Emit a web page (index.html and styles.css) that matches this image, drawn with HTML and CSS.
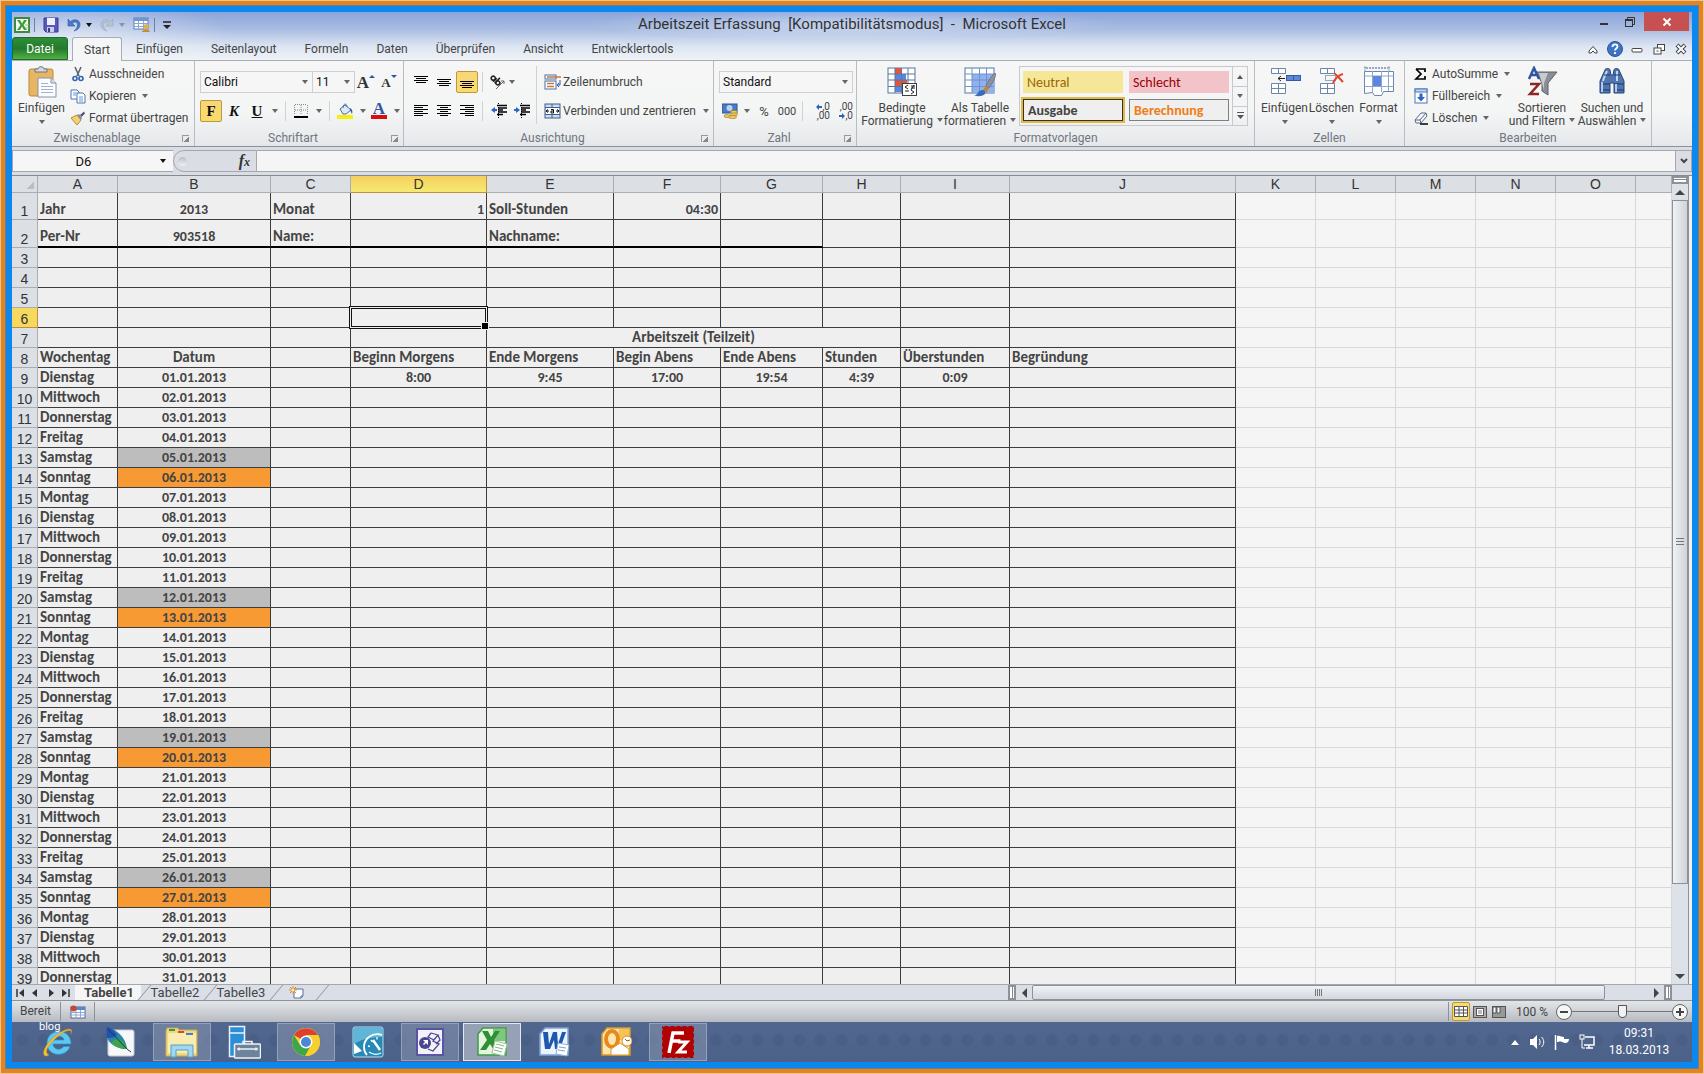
FILE: index.html
```html
<!DOCTYPE html>
<html lang="de">
<head>
  <meta charset="UTF-8" />
  <meta name="viewport" content="width=device-width, initial-scale=1.0" />
  <title>Arbeitszeit Erfassung - Microsoft Excel</title>
  <link rel="stylesheet" href="styles.css">
</head>
<body>

<div class="desktop">

  <header class="titlebar">
    <div class="title-row">
      <div class="quick-access">
        <svg class="app-icon" width="16" height="16" viewBox="0 0 16 16"><rect x="1" y="1" width="14" height="14" fill="#f4fbf2" stroke="#3b8a3e" stroke-width="2"/><path d="M3 3l3 0 2 3.500 2-3.500 3 0-3.500 5 3.500 5h-3l-2-3.500-2 3.500H3l3.500-5z" fill="#3f9b35"/><path d="M11 8h4M11 11h4" stroke="#8ec58b"/></svg>
        <span class="qa-sep"></span>
        <button aria-label="Speichern"><svg width="16" height="16" viewBox="0 0 16 16"><path d="M1 1h14v14H3l-2-2z" fill="#5a58b8" stroke="#3c3a8c"/><rect x="4" y="1" width="8" height="7" fill="#eef1fb"/><rect x="4" y="10" width="7" height="5" fill="#c9cdea"/><rect x="5" y="11" width="2" height="4" fill="#3c3a8c"/></svg></button>
        <button class="with-arrow" aria-label="Rückgängig"><svg width="14" height="16" viewBox="0 0 14 16"><path d="M1 2v7h7L5.500 6.500C8 4 11 5 10.500 8.500c-.2 2-1.500 4-3.500 5.500 4-1 6-3.500 6-6.500C13 2.500 7 1.500 3.500 4.500z" fill="#4a78c8" stroke="#2f5aa8" stroke-width=".6"/></svg><i class="arrow dark"></i></button>
        <button class="with-arrow" aria-label="Wiederholen"><svg width="14" height="16" viewBox="0 0 14 16"><path d="M13 2v7H6l2.500-2.500C6 4 3 5 3.500 8.500c.2 2 1.500 4 3.500 5.500-4-1-6-3.500-6-6.500C1 2.500 7 1.500 10.500 4.500z" fill="#b9c2d3" stroke="#98a4b8" stroke-width=".6"/></svg><i class="arrow pale"></i></button>
        <button aria-label="Tabelle"><svg width="17" height="16" viewBox="0 0 17 16"><rect x="1" y="1" width="14" height="11" fill="#fff" stroke="#5d7db8"/><rect x="1" y="1" width="14" height="3" fill="#6f97d6"/><path d="M1 6.500h14M1 9.500h14M5.500 4v8M10.500 4v8" stroke="#8aa6d3"/><circle cx="13" cy="9.500" r="2.500" fill="#e6b04a"/><path d="M9 15c0-3 8-3 8 0z" fill="#c98d28"/></svg></button>
        <span class="qa-sep"></span>
        <button aria-label="Anpassen"><svg width="8" height="8" viewBox="0 0 8 8"><path d="M0 1h8" stroke="#222" stroke-width="1.500"/><path d="M0 4h8L4 8z" fill="#222"/></svg></button>
      </div>
      <h1 class="window-title">Arbeitszeit Erfassung &nbsp;[Kompatibilitätsmodus] &nbsp;- &nbsp;Microsoft Excel</h1>
      <div class="window-buttons">
        <button aria-label="Minimieren"><svg width="10" height="10" viewBox="0 0 10 10"><rect x="1" y="6" width="8" height="2" fill="#333"/></svg></button>
        <button aria-label="Wiederherstellen"><svg width="12" height="12" viewBox="0 0 12 12"><path d="M3.500 3V1.500h7v7H9" fill="none" stroke="#333"/><rect x="1.500" y="4" width="7" height="6.500" fill="none" stroke="#333"/><path d="M1 4h8" stroke="#333" stroke-width="2"/></svg></button>
        <button class="close" aria-label="Schließen"><svg width="10" height="10" viewBox="0 0 10 10"><path d="M1.500 1.500l7 7M8.500 1.500l-7 7" stroke="#fff" stroke-width="2"/></svg></button>
      </div>
    </div>
    <div class="tab-row">
      <nav class="ribbon-tabs">
        <button class="file-tab">Datei</button>
        <button class="active">Start</button>
        <button>Einfügen</button>
        <button>Seitenlayout</button>
        <button>Formeln</button>
        <button>Daten</button>
        <button>Überprüfen</button>
        <button>Ansicht</button>
        <button>Entwicklertools</button>
      </nav>
      <div class="doc-buttons">
        <button aria-label="Menüband minimieren"><svg width="12" height="12" viewBox="0 0 12 12"><path d="M2 8l4-4.500L10 8v2H8L6 8l-2 2H2z" fill="#fff" stroke="#444"/></svg></button>
        <button aria-label="Hilfe"><svg width="16" height="16" viewBox="0 0 16 16"><circle cx="8" cy="8" r="7.500" fill="#3f74c4" stroke="#2b5799"/><path d="M5.500 6c0-3.500 5-3.500 5-.5 0 2-2.500 2-2.500 4M8 11v2" fill="none" stroke="#fff" stroke-width="1.800"/></svg></button>
        <button aria-label="Fenster minimieren"><svg width="12" height="12" viewBox="0 0 12 12"><rect x="1" y="5.500" width="10" height="3.500" rx="1" fill="#fff" stroke="#444"/></svg></button>
        <button aria-label="Fenster wiederherstellen"><svg width="12" height="12" viewBox="0 0 12 12"><rect x="4.500" y="1.500" width="7" height="6" fill="#fff" stroke="#444"/><rect x="1" y="5" width="7" height="6" fill="#fff" stroke="#444"/><path d="M3.500 8h2" stroke="#444"/></svg></button>
        <button aria-label="Fenster schließen"><svg width="12" height="12" viewBox="0 0 12 12"><path d="M2 2l8 8M10 2l-8 8" stroke="#444" stroke-width="4"/><path d="M2.500 2.500l7 7M9.500 2.500l-7 7" stroke="#fff" stroke-width="2"/></svg></button>
      </div>
    </div>
  </header>

  <section class="ribbon">

    <div class="group clipboard">
      <div class="group-body">
        <button class="big"><svg width="30" height="32" viewBox="0 0 30 32"><rect x="2" y="3" width="24" height="27" rx="2" fill="#e8b562" stroke="#b98a3d"/><path d="M8 6h12V3h-3c0-3-6-3-6 0H8z" fill="#d5d9de" stroke="#6c727a"/><path d="M11 12h13l5 5v14H11z" fill="#fbfcfe" stroke="#8794a8"/><path d="M24 12v5h5" fill="#dde3ec" stroke="#8794a8"/><path d="M14 17.500h7M14 20.500h12M14 23.500h12M14 26.500h12" stroke="#9fb2cf"/></svg><span>Einfügen</span><i class="arrow"></i></button>
        <div class="stack">
          <button class="small"><svg width="16" height="16" viewBox="0 0 16 16"><path d="M5 1l4 9M11 1L7 10" stroke="#5c6672" stroke-width="1.600"/><circle cx="5" cy="12.500" r="2" fill="none" stroke="#2f62b5" stroke-width="1.600"/><circle cx="11" cy="12.500" r="2" fill="none" stroke="#2f62b5" stroke-width="1.600"/></svg>Ausschneiden</button>
          <button class="small"><svg width="16" height="16" viewBox="0 0 16 16"><path d="M1 2h6l2 2v7H1z" fill="#fff" stroke="#4c74b5"/><path d="M7 5h6l2 2v8H7z" fill="#fff" stroke="#4c74b5"/><path d="M3 5h4M3 7h3M9 9h4M9 11h4M9 13h4" stroke="#6e95d6"/></svg>Kopieren<i class="arrow"></i></button>
          <button class="small"><svg width="16" height="16" viewBox="0 0 16 16"><path d="M1 8l6-3 4 5-4 5z" fill="#f3d071" stroke="#b68f31"/><path d="M7 5l2-1 3 4-1 2z" fill="#8d86a8"/><path d="M10 5l4-3.500 1 2L11.500 7z" fill="#565271"/></svg>Format übertragen</button>
        </div>
      </div>
      <div class="group-label"><span>Zwischenablage</span><i class="launcher"></i></div>
    </div>

    <div class="group font">
      <div class="group-body lines">
        <div class="line">
          <select class="font-name" aria-label="Schriftart"><option>Calibri</option></select><select class="font-size" aria-label="Schriftgrad"><option>11</option></select>
          <button class="tool" aria-label="Schrift vergrößern"><b class="grow">A</b><i class="mini-up"></i></button>
          <button class="tool" aria-label="Schrift verkleinern"><b class="shrink">A</b><i class="mini-down"></i></button>
        </div>
        <div class="line">
          <button class="tool on serif"><b>F</b></button>
          <button class="tool serif"><b><em>K</em></b></button>
          <button class="tool serif"><b><u>U</u></b></button>
          <i class="arrow spaced"></i><span class="sep"></span>
          <button class="tool" aria-label="Rahmen"><svg width="14" height="14" viewBox="0 0 14 14"><path d="M.5 1v10M7 1v10M13.500 1v10M1 .5h12M1 6h12" stroke="#8a8a8a" stroke-dasharray="1 1"/><path d="M0 13h14" stroke="#000" stroke-width="2"/></svg></button>
          <i class="arrow spaced"></i><span class="sep"></span>
          <button class="tool" aria-label="Füllfarbe"><svg width="16" height="16" viewBox="0 0 16 16"><path d="M3 6l5-4 6 5-5 4H6z" fill="#dfe8f5" stroke="#4a6ea8"/><path d="M6 5c0-5 4-5 4-1" fill="none" stroke="#4a6ea8"/><path d="M13 5c2 1 3 3 2 6-1-1-1-3-2-4z" fill="#2f5aa8"/><rect x="0" y="12" width="16" height="4" fill="#f7ee0c"/></svg></button>
          <i class="arrow spaced"></i>
          <button class="tool" aria-label="Schriftfarbe"><span class="font-color">A</span></button>
          <i class="arrow spaced"></i>
        </div>
      </div>
      <div class="group-label"><span>Schriftart</span><i class="launcher"></i></div>
    </div>

    <div class="group align">
      <div class="group-body">
        <div class="lines">
          <div class="line">
            <button class="tool" aria-label="Oben"><svg width="14" height="14" viewBox="0 0 14 14"><path d="M0 1.500h14M2 3.500h10M0 5.500h14M2 7.500h10" stroke="#000"/></svg></button>
            <button class="tool" aria-label="Mitte"><svg width="14" height="14" viewBox="0 0 14 14"><path d="M0 4.500h14M2 6.500h10M0 8.500h14M2 10.500h10" stroke="#000"/></svg></button>
            <button class="tool on" aria-label="Unten"><svg width="14" height="14" viewBox="0 0 14 14"><path d="M0 6.500h14M2 8.500h10M0 10.500h14M2 12.500h10" stroke="#000"/></svg></button>
            <span class="sep"></span>
            <button class="tool orient" aria-label="Ausrichtung"><svg width="16" height="16" viewBox="0 0 16 16"><g fill="none" stroke="#222" stroke-width="1.500" transform="rotate(45 5 6)"><circle cx="2.500" cy="6" r="2"/><path d="M5 3.500v5M7 1v7.500"/><circle cx="9" cy="6" r="2"/></g><path d="M6 15l8-8M14 10V7h-3" stroke="#666" fill="none"/></svg><i class="arrow"></i></button>
          </div>
          <div class="line">
            <button class="tool" aria-label="Links"><svg width="14" height="12" viewBox="0 0 14 12"><path d="M0 .5h14M0 2.500h9M0 4.500h14M0 6.500h9M0 8.500h14M0 10.500h9" stroke="#000"/></svg></button>
            <button class="tool" aria-label="Zentriert"><svg width="14" height="12" viewBox="0 0 14 12"><path d="M0 .5h14M3 2.500h8M0 4.500h14M3 6.500h8M0 8.500h14M3 10.500h8" stroke="#000"/></svg></button>
            <button class="tool" aria-label="Rechts"><svg width="14" height="12" viewBox="0 0 14 12"><path d="M0 .5h14M5 2.500h9M0 4.500h14M5 6.500h9M0 8.500h14M5 10.500h9" stroke="#000"/></svg></button>
            <span class="sep"></span>
            <button class="tool" aria-label="Einzug verkleinern"><svg width="16" height="16" viewBox="0 0 16 16"><path d="M6 2.500h10M7 5h9M7 7h5M7 9h9M6 11.500h6" stroke="#000" stroke-width="1.400"/><path d="M7.500 0v16" stroke="#000" stroke-dasharray="1 1"/><path d="M0 7l4-3v2h2v2H4v2z" fill="#2f62c5"/></svg></button>
            <button class="tool" aria-label="Einzug vergrößern"><svg width="16" height="16" viewBox="0 0 16 16"><path d="M6 2.500h10M7 5h9M7 7h5M7 9h9M6 11.500h6" stroke="#000" stroke-width="1.400"/><path d="M7.500 0v16" stroke="#000" stroke-dasharray="1 1"/><path d="M6 7L2 4v2H0v2h2v2z" fill="#2f62c5"/></svg></button>
          </div>
        </div>
        <span class="tall-sep"></span>
        <div class="lines">
          <div class="line"><button class="small"><svg width="17" height="16" viewBox="0 0 17 16"><rect x="1" y="1" width="11" height="4" fill="#fff" stroke="#4a6ea8"/><path d="M3 3h14" stroke="#c07a3a" stroke-width="1.500"/><rect x="1" y="7" width="11" height="8" fill="#fff" stroke="#4a6ea8"/><path d="M3 9.500h7M3 12.500h7" stroke="#c07a3a" stroke-width="1.500"/><path d="M16 6v5h-3M15 9l-2 2 2 2" fill="none" stroke="#2f5aa8"/></svg>Zeilenumbruch</button></div>
          <div class="line"><button class="small"><svg width="17" height="16" viewBox="0 0 17 16"><rect x="1" y="1" width="15" height="14" fill="#cfdcf0" stroke="#3f5f96"/><path d="M1 4.500h15M1 11.500h15M8 1v3M8 12v3" stroke="#3f5f96"/><rect x="2" y="5" width="13" height="6" fill="#fff"/><path d="M2 8h3M15 8h-3M4 6.500L2 8l2 1.500M13 6.500L15 8l-2 1.500" stroke="#111" fill="none"/><path d="M7 6.500h2.500V10H7V8h2.500" stroke="#111" fill="none"/></svg>Verbinden und zentrieren<i class="arrow"></i></button></div>
        </div>
      </div>
      <div class="group-label"><span>Ausrichtung</span><i class="launcher"></i></div>
    </div>

    <div class="group number">
      <div class="group-body lines">
        <div class="line"><select class="number-format" aria-label="Zahlenformat"><option>Standard</option></select></div>
        <div class="line">
          <button class="tool" aria-label="Währung"><svg width="16" height="16" viewBox="0 0 16 16"><rect x="0" y="1" width="15" height="9" fill="#4a7cc4" stroke="#2b5799"/><circle cx="7.500" cy="5" r="3" fill="#bcd2f0"/><ellipse cx="12" cy="9" rx="3.500" ry="1.600" fill="#f0cb62" stroke="#a87c1f" stroke-width=".7"/><ellipse cx="12" cy="11.500" rx="3.500" ry="1.600" fill="#f0cb62" stroke="#a87c1f" stroke-width=".7"/><ellipse cx="10.500" cy="14" rx="4" ry="1.600" fill="#f0cb62" stroke="#a87c1f" stroke-width=".7"/><ellipse cx="5" cy="13" rx="3" ry="1.500" fill="#f0cb62" stroke="#a87c1f" stroke-width=".7"/></svg></button>
          <i class="arrow"></i>
          <button class="tool sign">%</button>
          <button class="tool narrow">000</button>
          <span class="sep"></span>
          <button class="tool decimals"><span><svg width="6" height="6" viewBox="0 0 6 6"><path d="M0 3l3-3v2h3v2H3v2z" fill="#2f62c5"/></svg>,0</span><span>,00</span></button>
          <button class="tool decimals"><span>,00</span><span><svg width="6" height="6" viewBox="0 0 6 6"><path d="M6 3L3 0v2H0v2h3v2z" fill="#2f62c5"/></svg>,0</span></button>
        </div>
      </div>
      <div class="group-label"><span>Zahl</span><i class="launcher"></i></div>
    </div>

    <div class="group styles">
      <div class="group-body">
        <button class="big"><svg width="32" height="32" viewBox="0 0 32 32"><rect x="2" y="2" width="27" height="25" fill="#fff" stroke="#56779f"/><rect x="9" y="2" width="6" height="6" fill="#e8533c"/><rect x="9" y="8" width="11" height="6" fill="#5b86dd"/><rect x="9" y="14" width="12" height="6" fill="#e8533c"/><rect x="9" y="20" width="6" height="6" fill="#5b86dd"/><path d="M2 8h27M2 14h27M2 20.500h27M9 2v25M15.500 2v25M22 2v25" stroke="#56779f"/><rect x="16.500" y="17.500" width="14" height="12" fill="#fff" stroke="#3a3f48"/><path d="M22 19l-3 2 3 2M19 25h4M25 20h4M25 22h4M28 19l-3 5M25 24l3 2-3 2" fill="none" stroke="#222"/></svg><span>Bedingte<br>Formatierung<i class="arrow"></i></span></button>
        <button class="big"><svg width="32" height="32" viewBox="0 0 32 32"><rect x="1" y="2" width="29" height="25" fill="#fff" stroke="#56779f"/><rect x="8" y="8" width="22" height="19" fill="#8fb1ee"/><path d="M1 8h29M1 14h29M1 20.500h29M8 2v25M15.500 2v25M22.500 2v25" stroke="#6f93cc"/><path d="M31 7c-4 3-7 8-9 13l3 2c3-4 6-9 7-14z" fill="#8c939e" stroke="#5b626c" stroke-width=".6"/><path d="M22 20l3 2-2 4-4-2z" fill="#c8842e"/><path d="M10 30c4-1 3-5 8-6 3 0 4 2 3 4-3 3-7 2-11 2z" fill="#3d6cb4"/></svg><span>Als Tabelle<br>formatieren<i class="arrow"></i></span></button>
        <div class="gallery">
          <div class="swatches">
            <button class="neutral">Neutral</button>
            <button class="bad">Schlecht</button>
            <button class="output">Ausgabe</button>
            <button class="calc">Berechnung</button>
          </div>
          <div class="gallery-scroll">
            <button aria-label="Nach oben"><i class="arrow up"></i></button>
            <button aria-label="Nach unten"><i class="arrow"></i></button>
            <button aria-label="Mehr"><svg width="7" height="7" viewBox="0 0 7 7"><path d="M0 .5h7" stroke="#555"/><path d="M0 3h7L3.500 7z" fill="#555"/></svg></button>
          </div>
        </div>
      </div>
      <div class="group-label"><span>Formatvorlagen</span></div>
    </div>

    <div class="group cells">
      <div class="group-body">
        <button class="big"><svg width="32" height="32" viewBox="0 0 32 32"><path d="M2.500 2.500h14v5h-14zM9.500 2.500v5M2.500 17.500h14v10h-14zM9.500 17.500v10M2.500 22.500h14" fill="#fff" stroke="#6b86ad"/><rect x="17.500" y="9.500" width="14" height="5" fill="#5b86dd" stroke="#38599a"/><path d="M24.500 9.500v5" stroke="#38599a"/><path d="M9 12.500h7M12 10l-3 2.500 3 2.500" fill="none" stroke="#222"/></svg><span>Einfügen</span><i class="arrow"></i></button>
        <button class="big"><svg width="32" height="32" viewBox="0 0 32 32"><path d="M4.500 2.500h14v5h-14zM11.500 2.500v5M4.500 17.500h14v10h-14zM11.500 17.500v10M4.500 22.500h14" fill="#fff" stroke="#6b86ad"/><path d="M9.500 9.500h10v5h-10z" fill="none" stroke="#38599a" stroke-dasharray="1 1"/><path d="M18 7c3 2 6 6 9 9M27 8c-4 1-8 5-10 9" fill="none" stroke="#e2442c" stroke-width="2"/></svg><span>Löschen</span><i class="arrow"></i></button>
        <button class="big"><svg width="32" height="32" viewBox="0 0 32 32"><path d="M2 .5v4M26 .5v4M3 2h22" stroke="#38599a" stroke-dasharray="2 1"/><path d="M1.500 5.500h29v20h-10l-2 4h-7l-2-3-8 1z" fill="#fff" stroke="#6b86ad"/><path d="M1.500 10h29M1.500 20.500h29M9.500 5v21M18.500 5v21M25.500 5v20" stroke="#8fa7cc"/><rect x="10" y="10" width="8" height="10" fill="#5b86dd"/></svg><span>Format</span><i class="arrow"></i></button>
      </div>
      <div class="group-label"><span>Zellen</span></div>
    </div>

    <div class="group editing">
      <div class="group-body">
        <div class="stack">
          <button class="small"><svg width="16" height="16" viewBox="0 0 16 16"><path d="M3 3h9v3M3 3l5 5-5 5h9v-3" fill="none" stroke="#000" stroke-width="1.700"/></svg>AutoSumme<i class="arrow"></i></button>
          <button class="small"><svg width="16" height="16" viewBox="0 0 16 16"><rect x="2" y="1" width="12" height="14" fill="#fff" stroke="#4c74b5"/><rect x="2" y="1" width="12" height="3" fill="#c3d5f2" stroke="#4c74b5"/><path d="M6.500 5.500h3v3.500h2.500L8 13.500 4 9h2.500z" fill="#2f62c5"/></svg>Füllbereich<i class="arrow"></i></button>
          <button class="small"><svg width="16" height="16" viewBox="0 0 16 16"><path d="M2 10l6-7h5l1 3-6 7H3z" fill="#f3f5f9" stroke="#5c6b86"/><path d="M2 10h5l6-7M7 10l1 3" fill="none" stroke="#5c6b86"/><path d="M7 14h8" stroke="#000" stroke-width="1.500"/></svg>Löschen<i class="arrow"></i></button>
        </div>
        <button class="big"><svg width="32" height="32" viewBox="0 0 32 32"><path d="M10 6h21L22 17v12l-6-4v-8z" fill="#8b8f95" stroke="#5d6166"/><path d="M13 7h9l-4 10v7" fill="#d8dadd" opacity=".8"/><path d="M3 13l5-11 5 11M5 9h6" fill="none" stroke="#2f55a4" stroke-width="2.500"/><path d="M4 18h9L4 28h9" fill="none" stroke="#8e2626" stroke-width="2.500"/></svg><span>Sortieren<br>und Filtern<i class="arrow"></i></span></button>
        <button class="big"><svg width="32" height="32" viewBox="0 0 32 32"><path d="M9 4c0-2 5-2 5 0l1 5h2l1-5c0-2 5-2 5 0l5 11v12H18V17h-4v10H4V15z" fill="#4f76ae" stroke="#27447a"/><path d="M7 15c1-4 3-8 4-10M21 15V5" stroke="#c3d6f2" stroke-width="2"/><path d="M4 18h10M18 18h10M4 24h10M18 24h10M8 9h6M18 9h6" stroke="#1e3766"/><path d="M6 16v10M20 18v8" stroke="#b5cbed" stroke-width="2"/></svg><span>Suchen und<br>Auswählen<i class="arrow"></i></span></button>
      </div>
      <div class="group-label"><span>Bearbeiten</span></div>
    </div>
  </section>

  <section class="formula-bar">
    <div class="name-box"><input type="text" value="D6" aria-label="Namenfeld"><i class="arrow dark"></i></div>
    <div class="fx-area"><span class="knob"></span><button class="fx" aria-label="Funktion einfügen"><em>f<small>x</small></em></button></div>
    <input class="formula" type="text" aria-label="Bearbeitungsleiste">
    <button class="expand" aria-label="Bearbeitungsleiste erweitern"><svg width="8" height="7" viewBox="0 0 8 7"><path d="M1 1l3 3 3-3" fill="none" stroke="#444" stroke-width="2"/></svg></button>
  </section>

  <main class="workbook">
    <div class="sheet-wrap">
      <table class="sheet">
        <colgroup>
          <col class="c-row"><col class="c-a"><col class="c-b"><col class="c-c"><col class="c-d"><col class="c-e"><col class="c-f"><col class="c-g"><col class="c-h"><col class="c-i"><col class="c-j"><col class="c-k"><col class="c-k"><col class="c-k"><col class="c-k"><col class="c-k"><col>
        </colgroup>
        <thead>
          <tr><th class="corner"></th><th>A</th><th>B</th><th>C</th><th class="current">D</th><th>E</th><th>F</th><th>G</th><th>H</th><th>I</th><th>J</th><th>K</th><th>L</th><th>M</th><th>N</th><th>O</th><th></th></tr>
        </thead>
        <tbody id="rows"></tbody>
      </table>
    </div>
    <div class="v-scroll">
      <span class="split-box"></span>
      <button aria-label="Nach oben"><i class="tri up"></i></button>
      <div class="v-track"><div class="v-thumb"></div></div>
      <button aria-label="Nach unten"><i class="tri down"></i></button>
    </div>
  </main>

  <div class="sheet-bar">
    <div class="sheet-nav">
      <button aria-label="Erstes Blatt"><svg width="9" height="8" viewBox="0 0 9 8"><path d="M1 0v8" stroke="#333" stroke-width="1.500"/><path d="M8 0v8L3 4z" fill="#333"/></svg></button>
      <button aria-label="Voriges Blatt"><svg width="9" height="8" viewBox="0 0 9 8"><path d="M6 0v8L1 4z" fill="#333"/></svg></button>
      <button aria-label="Nächstes Blatt"><svg width="9" height="8" viewBox="0 0 9 8"><path d="M3 0v8l5-4z" fill="#333"/></svg></button>
      <button aria-label="Letztes Blatt"><svg width="9" height="8" viewBox="0 0 9 8"><path d="M8 0v8" stroke="#333" stroke-width="1.500"/><path d="M1 0v8l5-4z" fill="#333"/></svg></button>
    </div>
    <div class="sheet-tabs">
      <button class="active">Tabelle1</button>
      <button>Tabelle2</button>
      <button>Tabelle3</button>
      <button class="new" aria-label="Neues Blatt"><svg width="16" height="14" viewBox="0 0 16 14"><path d="M5 3h9v7l-2 2H5z" fill="#fff" stroke="#5a6fa8"/><path d="M14 10h-2v2" fill="none" stroke="#5a6fa8"/><path d="M4 0v8M0 4h8M1 1l6 6M7 1L1 7" stroke="#d88a1e"/><circle cx="4" cy="4" r="1.500" fill="#ffe9a0"/></svg></button>
    </div>
    <div class="h-scroll">
      <span class="split-box side"></span>
      <button aria-label="Nach links"><i class="tri left"></i></button>
      <div class="h-track"><div class="h-thumb"></div></div>
      <button aria-label="Nach rechts"><i class="tri right"></i></button>
      <span class="split-box side"></span>
    </div>
  </div>

  <footer class="status-bar">
    <span class="ready">Bereit</span>
    <button class="macro" aria-label="Makro aufzeichnen"><svg width="16" height="14" viewBox="0 0 16 14"><rect x="1" y="2" width="14" height="11" fill="#fff" stroke="#4f69a5"/><rect x="1" y="2" width="14" height="3" fill="#5d83c9"/><path d="M1 7.500h14M1 10h14M6 5v8M10.500 5v8" stroke="#8fa7cf"/><circle cx="3.500" cy="3.500" r="3" fill="#c8452f"/></svg></button>
    <div class="views">
      <button class="on" aria-label="Normal"><svg width="14" height="12" viewBox="0 0 14 12"><path d="M.5.5h13v10H.5zM.5 4h13M.5 7h13M5 .5v10M9.500.5v10" fill="#fff" stroke="#555"/></svg></button>
      <button aria-label="Seitenlayout"><svg width="14" height="12" viewBox="0 0 14 12"><rect x=".5" y=".5" width="13" height="11" fill="#aaa" stroke="#555"/><rect x="3.500" y="2.500" width="7" height="7" fill="#fff" stroke="#555"/><path d="M5 5h4M5 7h4" stroke="#777"/></svg></button>
      <button aria-label="Umbruchvorschau"><svg width="14" height="12" viewBox="0 0 14 12"><rect x=".5" y=".5" width="13" height="11" fill="#999" stroke="#555"/><path d="M1 1h3v6H1zM5 1h3v6H5z" fill="#fff" stroke="#555"/></svg></button>
    </div>
    <span class="zoom-value">100 %</span>
    <button class="zoom-btn" aria-label="Verkleinern"><svg width="16" height="16" viewBox="0 0 16 16"><circle cx="8" cy="8" r="7.500" fill="#f6f6f6" stroke="#666"/><path d="M4 8h8" stroke="#444" stroke-width="2"/></svg></button>
    <input class="zoom-slider" type="range" min="0" max="100" value="50" aria-label="Zoom">
    <button class="zoom-btn" aria-label="Vergrößern"><svg width="16" height="16" viewBox="0 0 16 16"><circle cx="8" cy="8" r="7.500" fill="#f6f6f6" stroke="#666"/><path d="M4 8h8M8 4v8" stroke="#444" stroke-width="2"/></svg></button>
  </footer>

  <div class="taskbar">
    <div class="apps">
      <button class="app ie" aria-label="Internet Explorer"><svg width="32" height="32" viewBox="0 0 32 32"><path d="M29 18H11c.5 6 8 7 10.500 2.500H28C24 32 5 31 5 17 5 2 29 1 29 18zM11 14h11c-.5-5-10-5-11 0z" fill="#5cc8f2" stroke="#2b8fc9" stroke-width=".7"/><path d="M7 29c-7 4-8-5 2-15C20 3 33-1 29 8c2-7-8-3-16 5-8 7-11 14-6 16z" fill="#f6c335" stroke="#c98f17" stroke-width=".5"/></svg><span class="blog">blog</span></button>
      <button class="app" aria-label="Feder"><svg width="32" height="32" viewBox="0 0 32 32"><rect x="4" y="4" width="26" height="26" rx="2" fill="#f5f7f8" stroke="#c5cbd2"/><path d="M3 1c9 2 19 10 20 22-10 0-19-6-20-12-1-4-1-7 0-10z" fill="#2a86a8"/><path d="M3 1c3 0 7 3 10 8-3 3-7 3-10 3-1-4-1-8 0-11z" fill="#254fb0"/><path d="M13 12c7 3 9 7 10 11-7 0-12-2-16-6z" fill="#3fa24d"/><path d="M4 3l19 20 4 3" fill="none" stroke="#143d4d"/></svg></button>
      <button class="app open" aria-label="Explorer"><svg width="34" height="32" viewBox="0 0 34 32"><path d="M1 5l1-3h11l1 2h18v26H1z" fill="#eed885" stroke="#c9a94e"/><path d="M3 7h28v20H3z" fill="#f8ecb0"/><path d="M4 3h6v2H4z" fill="#3c9c46"/><path d="M13 5h6v2h-6z" fill="#d14b32"/><path d="M21 7h7v2h-7z" fill="#3e83c9"/><path d="M6 31V19h22v12h-5v-7H11v7z" fill="#9fd8f0" stroke="#5b9fc6"/></svg></button>
      <button class="app" aria-label="Server-Manager"><svg width="34" height="34" viewBox="0 0 34 34"><path d="M2.500 1.500h15v30h-15zM2.500 8h15" fill="#2a8ed8" stroke="#eaf3fb" stroke-width="1.500"/><rect x="7.500" y="19" width="26" height="14" rx="1" fill="#6d829b" stroke="#eef3f8" stroke-width="1.500"/><path d="M16 19v-2.500h9V19M10 24h21M12 22.500v3M29 22.500v3" fill="none" stroke="#eef3f8" stroke-width="1.500"/></svg></button>
      <button class="app open" aria-label="Chrome"><svg width="32" height="32" viewBox="0 0 32 32"><circle cx="16" cy="16" r="14" fill="#f7cf2e"/><path d="M16 16L4 9a14 14 0 0 1 24 0H16z" fill="#dd4030"/><path d="M4 9a14 14 0 0 0 11 21l6-11-5-3-6 3z" fill="#3da64d"/><path d="M28 9H16l6 10-6 11A14 14 0 0 0 28 9z" fill="#f7cf2e"/><circle cx="16" cy="16" r="6.500" fill="#fff"/><circle cx="16" cy="16" r="5" fill="#4a87d6"/></svg></button>
      <button class="app" aria-label="Leistung"><svg width="32" height="32" viewBox="0 0 32 32"><rect x="1" y="1" width="30" height="30" rx="2" fill="#2789b5" stroke="#b6dcee"/><path d="M2 2h28v9C20 11 10 13 2 18z" fill="#5fb6d8"/><path d="M30 9c-9-3-18 3-18 12 0 3 1 6 3 8" fill="none" stroke="#fff" stroke-width="1.800"/><path d="M16 20l2 .5M19 14l1.500 2M25 11v2.500M17 26c3 2 8 3 12 1" fill="none" stroke="#fff" stroke-width="1.300"/><path d="M21 14l7 10" stroke="#fff" stroke-width="2.500"/><path d="M2 17l8 8-8 3z" fill="#fff"/></svg></button>
      <button class="app open" aria-label="Expression"><svg width="30" height="30" viewBox="0 0 30 30"><rect x="2" y="2" width="26" height="26" fill="#f2f1fb" stroke="#5a54a6" stroke-width="2"/><circle cx="10" cy="16" r="6" fill="#4b468f"/><path d="M8 13h5v5l-2-2-2 2-1-1 2-2z" fill="#fff"/><path d="M16 6l7 2-5 6 6 3-6 7-5-2M16 6l-3 4 6 3M23 8l2 5-4 4" fill="none" stroke="#4b468f" stroke-width="1.300"/></svg></button>
      <button class="app open front" aria-label="Excel"><svg width="32" height="32" viewBox="0 0 32 32"><path d="M2 8l5-6h23v27H2z" fill="#e4f4df" stroke="#3f9b46" stroke-width="1.500"/><path d="M17 3h12v12H17z" fill="#7fc77b"/><path d="M6 5h6l3 6 4-6h5l-6 9 6 10h-6l-4-6-4 6H4l7-10z" fill="#2f8f34"/><path d="M19 15l12 3-3 12-12-3z" fill="#fff" stroke="#9ac59b"/><path d="M20 18l8 2M19 21l8 2M18 24l8 2" stroke="#7fb680"/></svg></button>
      <button class="app" aria-label="Word"><svg width="32" height="32" viewBox="0 0 32 32"><path d="M2 8l5-6h23v27H2z" fill="#eef4fc" stroke="#7ea2d8" stroke-width="1.500"/><path d="M5 6h5l1 12 4-12h4l1 12 4-12h4l-6 17h-5l-1-9-4 9H7z" fill="#1e58ae"/><path d="M20 17l11 2-2 11-11-2z" fill="#fff" stroke="#8fb0df"/><path d="M21 21l7 1M20 24l7 1" stroke="#7da0d4"/></svg></button>
      <button class="app" aria-label="Outlook"><svg width="32" height="32" viewBox="0 0 32 32"><path d="M2 8l5-6h23v27H2z" fill="#fbe6ae" stroke="#d99a25" stroke-width="1.500"/><path d="M19 3h10v11H19z" fill="#f4c457"/><ellipse cx="12" cy="13" rx="6" ry="8" fill="none" stroke="#e8891d" stroke-width="4"/><path d="M11 23l9-6 9 6v6H11z" fill="#fff" stroke="#d99a25"/><circle cx="27" cy="15" r="5" fill="#fff" stroke="#d98a25"/><path d="M25 13l2 2 3-1" fill="none" stroke="#a05a10"/></svg></button>
      <button class="app open" aria-label="FileZilla"><svg width="32" height="32" viewBox="0 0 32 32"><rect width="32" height="32" fill="#b30000"/><rect x=".5" y=".5" width="31" height="31" fill="none" stroke="#5c7090" stroke-dasharray="2 4"/><path d="M7 27L11 7h11M9.500 15h9" fill="none" stroke="#fff" stroke-width="3.500"/><path d="M16 16h9l-9 10h9" fill="none" stroke="#fff" stroke-width="3"/></svg></button>
    </div>
    <div class="tray">
      <svg width="10" height="8" viewBox="0 0 10 8"><path d="M1 7l4-5 4 5z" fill="#fff"/></svg>
      <svg width="16" height="16" viewBox="0 0 16 16"><path d="M1 5h3l4-4v14l-4-4H1z" fill="#fff"/><path d="M10 5c1.500 2 1.500 4 0 6M12.500 3c3 3 3 7 0 10" fill="none" stroke="#fff"/></svg>
      <svg width="16" height="16" viewBox="0 0 16 16"><path d="M1.500 1v15" stroke="#fff" stroke-width="1.500"/><path d="M3 2c3-1 4 1 7 1v2h5c0 2-1 4-4 4-1 0-2-1-3-1-2-1-3 0-5 0z" fill="#fff"/></svg>
      <svg width="16" height="16" viewBox="0 0 16 16"><path d="M6 3h9v8H5M10 11v3M7 14h7" fill="none" stroke="#fff" stroke-width="1.500"/><rect x="1" y="1" width="4" height="4" fill="none" stroke="#fff"/><path d="M3 5v9h3" fill="none" stroke="#fff"/></svg>
      <div class="clock"><span>09:31</span><span>18.03.2013</span></div>
    </div>
  </div>

</div>

<script src="script.js"></script>
</body>
</html>
```
FILE: styles.css
```css
* {
  box-sizing: border-box;
}

body {
  margin: 0;
  padding: 5px;
  font-family: 'Segoe UI', Roboto, sans-serif;
  font-size: 12px;
  color: #444;
  background: #e2851f;
  box-shadow: inset 0 0 0 1px #f3c492;
  overflow: hidden;
}

button {
  display: flex;
  align-items: center;
  justify-content: center;
  padding: 0;
  border: none;
  background: none;
  font: inherit;
  color: inherit;
  white-space: nowrap;
}

input, select {
  font: inherit;
  border-radius: 0;
}

svg {
  display: block;
  flex: none;
}

.desktop {
  display: flex;
  flex-direction: column;
  height: calc(100vh - 10px);
  border: 7px solid #0b88f0;
  outline: 1px solid #6d7f8c;
  outline-offset: -1px;
}

/* small triangles */
.arrow {
  display: inline-block;
  flex: none;
  width: 0;
  height: 0;
  border: 3px solid transparent;
  border-top: 4px solid #666;
  border-bottom: 0;
  margin-left: 6px;
}

.arrow.dark {
  border-top-color: #111;
}

.arrow.pale {
  border-top-color: #8a93a5;
}

.arrow.up {
  border-top: 0;
  border-bottom: 4px solid #555;
}

/* title bar and ribbon tabs */
.titlebar {
  flex: none;
  background: radial-gradient(ellipse 160px 40px at 60px 24px, rgba(255, 255, 255, 0.5), transparent),
    radial-gradient(ellipse 270px 16px at 50% 12px, rgba(255, 255, 255, 0.4), transparent),
    linear-gradient(#8ba5da 0, #a9bce2 35%, #dce5f2 70%, #f1f4f7 100%);
}

.title-row {
  display: grid;
  grid-template-columns: 1fr auto 1fr;
  height: 25px;
}

.quick-access {
  display: flex;
  align-items: center;
  gap: 8px;
  padding-left: 2px;
}

.quick-access .arrow {
  margin-left: 5px;
}

.qa-sep {
  width: 1px;
  height: 14px;
  margin-left: -4px;
  background: #6e7fa3;
}

.window-title {
  margin: 0;
  font-size: 15px;
  font-weight: 400;
  line-height: 25px;
  color: #333;
}

.window-buttons {
  display: flex;
  justify-content: flex-end;
  align-items: flex-start;
  padding-right: 3px;
}

.window-buttons button {
  width: 26px;
  height: 19px;
}

.window-buttons .close {
  width: 45px;
  margin-left: 1px;
  background: #c75050;
}

.tab-row {
  display: flex;
  justify-content: space-between;
  height: 24px;
  border-bottom: 1px solid #a9adb4;
}

.ribbon-tabs {
  display: flex;
}

.ribbon-tabs button {
  padding: 0 14px;
}

.ribbon-tabs .file-tab {
  width: 56px;
  margin-right: 4px;
  border: 1px solid #1e6b2a;
  border-radius: 3px 3px 0 0;
  background: linear-gradient(#2f8e38, #237a2c 50%, #53b043);
  color: #fff;
}

.ribbon-tabs .active {
  width: 50px;
  height: 24px;
  border: 1px solid #a9adb4;
  border-bottom: none;
  border-radius: 3px 3px 0 0;
  background: #f5f6f6;
}

.doc-buttons {
  display: flex;
  gap: 6px;
  padding-right: 3px;
}

.doc-buttons button {
  width: 16px;
}

/* ribbon */
.ribbon {
  display: flex;
  flex: none;
  height: 86px;
  background: linear-gradient(#f6f6f6 0, #f4f5f5 60%, #e5e8eb 100%);
  border-bottom: 1px solid #8d9298;
}

.group {
  display: flex;
  flex-direction: column;
  flex: none;
  border-right: 1px solid #b9bdc2;
}

.clipboard { width: 183px; }
.font { width: 209px; }
.align { width: 310px; }
.number { width: 143px; }
.styles { width: 398px; }
.cells { width: 150px; }
.editing { width: 247px; }

.group-body {
  display: flex;
  flex: 1;
}

.group-label {
  display: flex;
  align-items: center;
  height: 16px;
  color: #70757e;
}

.group-label span {
  flex: 1;
  text-align: center;
}

.launcher {
  width: 7px;
  height: 7px;
  margin-right: 5px;
  border: 1px solid #999;
  border-right: none;
  border-bottom: none;
  background: linear-gradient(135deg, transparent 55%, #888 56%);
}

.big {
  flex-direction: column;
  justify-content: flex-start;
  width: 47px;
  padding-top: 5px;
  line-height: 13px;
}

.big svg {
  height: 32px;
}

.big > span {
  margin-top: 4px;
}

.big > .arrow {
  margin: 5px 0 0;
}

.big span .arrow {
  margin: 0 0 3px 4px;
}

.clipboard .big {
  margin: 0 5px 0 6px;
}

.styles .big {
  width: 78px;
}

.styles .group-body {
  padding-left: 6px;
}

.cells .group-body {
  padding-left: 6px;
}

.editing .big {
  width: 70px;
}

.stack {
  display: flex;
  flex-direction: column;
  padding-top: 2px;
}

.editing .stack {
  width: 102px;
  padding-left: 8px;
}

.small {
  justify-content: flex-start;
  gap: 3px;
  height: 22px;
}

.small .arrow {
  margin-left: 3px;
}

.lines {
  display: flex;
  flex-direction: column;
  gap: 7px;
  padding-top: 10px;
}

.line {
  display: flex;
  align-items: center;
  height: 22px;
}

.font .lines, .number .lines,
.font .line, .number .line {
  padding-left: 0;
}

.font .group-body, .number .group-body {
  padding-left: 5px;
}

.align .group-body > .lines:first-child {
  width: 132px;
  padding-left: 6px;
}

.align .small {
  gap: 2px;
}

.align .small .arrow {
  margin-left: 5px;
}

select {
  appearance: none;
  height: 22px;
  padding: 0 3px;
  border: 1px solid #cdcfd2;
  background: #f6f6f6 url("data:image/svg+xml,%3Csvg xmlns='http://www.w3.org/2000/svg' width='6' height='4'%3E%3Cpath d='M0 0h6L3 4z' fill='%23666'/%3E%3C/svg%3E") no-repeat right 4px center;
  color: #111;
}

.font-name { width: 113px; }
.font-size { width: 43px; margin-left: -1px; }
.number-format { width: 134px; }

.tool {
  width: 22px;
  height: 22px;
  margin-right: 1px;
  flex: none;
}

.tool.on {
  border: 1px solid #c2973c;
  border-radius: 2px;
  background: linear-gradient(#f6d679, #f8dc6a);
}

.tool.orient {
  width: 28px;
}

.tool.orient .arrow {
  margin-left: 3px;
}

.serif {
  font-family: 'Liberation Serif', serif;
  font-size: 15px;
  color: #111;
}

.grow, .shrink, .font-color {
  font-family: 'Liberation Serif', serif;
  font-size: 17px;
  line-height: 15px;
  color: #333;
}

.shrink {
  font-size: 13px;
}

.mini-up, .mini-down {
  align-self: flex-start;
  margin-top: 4px;
  border: 3px solid transparent;
  border-top: none;
  border-bottom: 3px solid #2f55a4;
}

.mini-down {
  border-bottom: none;
  border-top: 3px solid #2f55a4;
}

.font-color {
  width: 16px;
  border-bottom: 4px solid #d90f0f;
  line-height: 12px;
  font-weight: bold;
  color: #2f55a4;
}

.sep {
  width: 1px;
  height: 20px;
  margin: 0 5px 0 3px;
  background: #cfd1d4;
}

.tall-sep {
  width: 1px;
  margin: 5px 7px 6px 0;
  background: #cfd1d4;
}

.font .sep {
  margin: 0 4px 0 5px;
}

.font .arrow {
  margin: 0 2px 0 3px;
}

.number .line .arrow {
  margin: 0 3px 0 2px;
}

.sign {
  font-size: 13px;
}

.narrow {
  font-size: 11px;
}

.decimals {
  flex-direction: column;
  align-items: flex-end;
  font-size: 10px;
  line-height: 9px;
}

.decimals span {
  display: flex;
  align-items: center;
}

.gallery {
  display: flex;
  width: 229px;
  height: 60px;
  margin: 5px 6px 0 auto;
  border: 1px solid #c6c9cd;
}

.swatches {
  display: grid;
  grid-template-columns: 100px 100px;
  grid-auto-rows: 22px;
  gap: 6px;
  padding: 4px 3px;
  flex: 1;
}

.swatches button {
  justify-content: flex-start;
  padding-left: 4px;
  font-family: Calibri, Lato, sans-serif;
  font-size: 14px;
}

.swatches .neutral {
  background: #f6e798;
  color: #9c6500;
}

.swatches .bad {
  background: #f3c3ca;
  color: #9c0006;
}

.swatches .output {
  border: 1px solid #333;
  outline: 2px solid #e3b83e;
  background: #efefef;
  font-weight: bold;
}

.swatches .calc {
  border: 1px solid #7f7f7f;
  background: #efefef;
  font-weight: bold;
  color: #ef7d15;
}

.gallery-scroll {
  display: grid;
  grid-template-rows: 1fr 1fr 1fr;
  width: 15px;
  border-left: 1px solid #c6c9cd;
}

.gallery-scroll button + button {
  border-top: 1px solid #c6c9cd;
}

.gallery-scroll .arrow {
  margin: 0;
}

/* formula bar */
.formula-bar {
  display: flex;
  flex: none;
  height: 29px;
  padding: 3px 0;
  background: #dadee4;
  border-bottom: 1px solid #868b92;
}

.name-box {
  display: flex;
  align-items: center;
  width: 161px;
  background: #f6f6f6;
  border: 1px solid #a4a8ae;
  border-right: none;
  padding-right: 7px;
}

.name-box input {
  flex: 1;
  min-width: 0;
  border: none;
  background: none;
  text-align: center;
  font-size: 13px;
  color: #111;
}

.fx-area {
  display: flex;
  align-items: center;
  justify-content: space-between;
  width: 84px;
  padding: 0 6px 0 4px;
  border: 1px solid #a4a8ae;
  border-radius: 11px 0 0 11px;
}

.knob {
  width: 9px;
  height: 9px;
  border-radius: 50%;
  background: linear-gradient(#b9bec5, #f0f2f4);
}

.fx {
  font-family: 'Liberation Serif', serif;
  font-size: 16px;
  font-weight: bold;
  color: #333;
}

.fx small {
  font-size: 12px;
}

.formula {
  flex: 1;
  border: 1px solid #a4a8ae;
  border-left: none;
  background: #f5f5f5;
}

.expand {
  width: 16px;
  border: 1px solid #a4a8ae;
  border-left: none;
}

/* sheet */
.workbook {
  display: flex;
  flex: 1;
  min-height: 0;
  background: #e6e9ed;
}

.sheet-wrap {
  flex: 1;
  min-width: 0;
  overflow: hidden;
  background: #f5f5f5;
}

.sheet {
  width: 100%;
  table-layout: fixed;
  border-collapse: separate;
  border-spacing: 0;
}

.c-row { width: 26px; }
.c-a, .c-c, .c-k { width: 80px; }
.c-b { width: 153px; }
.c-d { width: 136px; }
.c-e { width: 127px; }
.c-f { width: 107px; }
.c-g { width: 102px; }
.c-h { width: 78px; }
.c-i { width: 109px; }
.c-j { width: 226px; }

.sheet th {
  height: 20px;
  padding: 0;
  border-right: 1px solid #a9adb4;
  border-bottom: 1px solid #a9adb4;
  background: #dce0e5;
  font-family: 'Liberation Sans', sans-serif;
  font-size: 14px;
  font-weight: 400;
  line-height: 16px;
  vertical-align: bottom;
  color: #333;
}

.sheet thead th {
  height: 17px;
}

.sheet .corner {
  background: linear-gradient(135deg, transparent 55%, #b9bec5 56%) no-repeat 13px 5px / 9px 8px, #dce0e5;
}

.sheet thead .current {
  background: linear-gradient(#f5cf5e, #f6ea72);
  border-color: #c2903c;
}

.sheet tbody .current {
  background: #f6d95e;
  border-color: #c2903c;
}

.sheet td {
  height: 20px;
  padding: 0 2px;
  border-right: 1px solid #3c3c3c;
  border-bottom: 1px solid #3c3c3c;
  background: #efefef;
  font-family: Calibri, Lato, sans-serif;
  font-size: 15px;
  font-weight: bold;
  line-height: 19px;
  vertical-align: bottom;
  white-space: nowrap;
}

.sheet td.empty {
  background: #f5f5f5;
  border-color: #d7d8da;
}

.sheet td.mid { text-align: center; }
.sheet td.right { text-align: right; }
.sheet td.num { font-size: 14px; }
.sheet td.saturday { background: #bdbdbd; }
.sheet td.sunday { background: #f79a33; }

.sheet .row-1 td { height: 27px; }
.sheet .row-2 td { height: 28px; }
.sheet .row-2 td.thick { border-bottom: 2px solid #000; }

.sheet td.selected {
  position: relative;
}

.selection {
  position: absolute;
  inset: -2px;
  border: 3px double #111;
  background: #efefef;
}

.selection::after {
  content: "";
  position: absolute;
  right: -4px;
  bottom: -4px;
  width: 6px;
  height: 6px;
  border: 1px solid #efefef;
  background: #000;
}

/* scroll bars */
.v-scroll {
  display: flex;
  flex-direction: column;
  width: 20px;
  background: linear-gradient(to right, #dde1e8 16px, #8d9299 16px, #8d9299 17px, #f0f1f3 17px);
}

.v-scroll button, .h-scroll button {
  flex: none;
  width: 16px;
  height: 16px;
}

.split-box {
  flex: none;
  width: 16px;
  height: 8px;
  border: 2px solid #8d9299;
  background: linear-gradient(#fff 1px, #888 1px, #888 2px, #fff 2px);
}

.split-box.side {
  width: 8px;
  height: 15px;
  background: linear-gradient(to right, #fff 2px, #888 2px, #888 3px, #fff 3px);
}

.v-track {
  flex: 1;
  width: 16px;
}

.v-thumb {
  height: 89%;
  border: 1px solid #8d9299;
  background: repeating-linear-gradient(#777 0 1px, transparent 1px 3px) no-repeat center / 8px 7px,
    linear-gradient(to right, #f0f2f5, #cfd3d9);
}

.tri {
  border: 5px solid transparent;
}

.tri.up { border-top: 0; border-bottom-color: #444; }
.tri.down { border-bottom: 0; border-top-color: #444; }
.tri.left { border-left: 0; border-right-color: #444; }
.tri.right { border-right: 0; border-left-color: #444; }

.sheet-bar {
  display: flex;
  flex: none;
  height: 17px;
  border-top: 1px solid #a4a8ae;
  border-bottom: 1px solid #8d9299;
  background: #dadfe7;
}

.sheet-nav {
  display: flex;
  align-items: center;
  width: 63px;
  gap: 6px;
  padding-left: 4px;
}

.sheet-tabs {
  display: flex;
  font-size: 13px;
  line-height: 15px;
}

.sheet-tabs button {
  position: relative;
  width: 66px;
  padding-left: 2px;
}

/* slanted divider between two tabs */
.sheet-tabs button::after {
  content: "";
  position: absolute;
  top: 0;
  right: -4px;
  width: 1px;
  height: 15px;
  background: #8d9299;
  transform: skewX(-40deg);
}

.sheet-tabs .active {
  background: linear-gradient(130deg, #f6f6f6 57px, transparent 58px);
  font-weight: bold;
}

.sheet-tabs .new {
  width: 46px;
}

.h-scroll {
  display: flex;
  width: 664px;
  margin: 0 20px 0 auto;
}

.h-track {
  flex: 1;
}

.h-thumb {
  width: 93%;
  height: 15px;
  border: 1px solid #8d9299;
  border-radius: 2px;
  background: repeating-linear-gradient(to right, #777 0 1px, transparent 1px 2px) no-repeat center / 7px 7px,
    linear-gradient(#f0f2f7, #d3d7de);
}

/* status bar */
.status-bar {
  display: flex;
  align-items: center;
  flex: none;
  height: 21px;
  padding-right: 4px;
  background: linear-gradient(#e3e6e9, #b7bbc0);
}

.ready {
  width: 49px;
  padding-left: 8px;
  border-right: 1px solid #8d9299;
  line-height: 19px;
}

.macro {
  width: 34px;
  height: 19px;
  border-right: 1px solid #8d9299;
}

.views {
  display: flex;
  align-items: center;
  gap: 1px;
  margin-left: auto;
  padding-left: 3px;
  border-left: 1px solid #8d9299;
}

.views button {
  width: 18px;
  height: 19px;
}

.views .on {
  border: 1px solid #c2973c;
  border-radius: 2px;
  background: #f6dc6c;
}

.zoom-value {
  width: 48px;
  text-align: center;
}

.zoom-slider {
  appearance: none;
  width: 100px;
  height: 16px;
  margin: 0;
  background: linear-gradient(#777, #777) no-repeat center / 100% 1px;
}

.zoom-slider::-webkit-slider-thumb {
  appearance: none;
  width: 9px;
  height: 13px;
  border: 1px solid #555;
  border-radius: 1px 1px 5px 5px;
  background: #f2f2f2;
}

/* taskbar */
.taskbar {
  display: flex;
  justify-content: space-between;
  flex: none;
  height: 40px;
  padding: 1px 0;
  background: radial-gradient(circle, rgba(60, 78, 115, 0.25) 5px, transparent 7px) 0 4px / 21px 28px, linear-gradient(#52678f, #4c6188);
}

.apps {
  display: flex;
  gap: 4px;
  padding-left: 17px;
}

.app {
  position: relative;
  width: 58px;
}

.app.open {
  border: 1px solid #93a1bb;
  background: rgba(140, 152, 178, 0.5);
}

.app.front {
  border-color: #e3e8f0;
  background: #96a1b6;
}

.blog {
  position: absolute;
  left: 10px;
  top: -3px;
  font-size: 11px;
  color: #fff;
}

.tray {
  display: flex;
  align-items: center;
  gap: 9px;
  padding-right: 22px;
  color: #fff;
}

.clock {
  display: flex;
  flex-direction: column;
  align-items: center;
  width: 62px;
  margin-left: 4px;
  line-height: 17px;
}
```
FILE: script.js
```javascript
const body = document.getElementById("rows");
const letters = "ABCDEFGHIJKLMNOP".split("");
const days = ["Sonntag", "Montag", "Dienstag", "Mittwoch", "Donnerstag", "Freitag", "Samstag"];

// fixed cells: [text, extra classes]
const cells = {
  A1: ["Jahr"], B1: ["2013", "mid num"], C1: ["Monat"], D1: ["1", "right num"],
  E1: ["Soll-Stunden"], F1: ["04:30", "right num"],
  A2: ["Per-Nr"], B2: ["903518", "mid num"], C2: ["Name:"], E2: ["Nachname:"],
  E7: ["Arbeitszeit (Teilzeit)", "mid"],
  A8: ["Wochentag"], B8: ["Datum", "mid"], D8: ["Beginn Morgens"], E8: ["Ende Morgens"],
  F8: ["Begin Abens"], G8: ["Ende Abens"], H8: ["Stunden"], I8: ["Überstunden"], J8: ["Begründung"],
  D9: ["8:00", "mid num"], E9: ["9:45", "mid num"], F9: ["17:00", "mid num"],
  G9: ["19:54", "mid num"], H9: ["4:39", "mid num"], I9: ["0:09", "mid num"]
};

for (let day = 1; day <= 31; day++) {
  const weekday = new Date(2013, 0, day).getDay();
  let color = "";
  if (weekday === 6) color = " saturday";
  if (weekday === 0) color = " sunday";
  cells["A" + (day + 8)] = [days[weekday]];
  cells["B" + (day + 8)] = [String(day).padStart(2, "0") + ".01.2013", "mid num" + color];
}

for (let row = 1; row <= 39; row++) {
  const tr = document.createElement("tr");
  tr.className = "row-" + row;

  const head = document.createElement("th");
  head.textContent = row;
  if (row === 6) head.className = "current";
  tr.appendChild(head);

  letters.forEach((letter, i) => {
    // E7:H7 is one merged cell
    if (row === 7 && "FGH".includes(letter)) return;

    const td = document.createElement("td");
    const cell = cells[letter + row];
    if (cell) {
      td.textContent = cell[0];
      if (cell[1]) td.className = cell[1];
    }
    if (i > 9) td.classList.add("empty");
    if (row === 2 && i < 7) td.classList.add("thick");
    if (row === 7 && letter === "E") td.colSpan = 4;
    if (row === 6 && letter === "D") {
      td.classList.add("selected");
      td.innerHTML = '<div class="selection"></div>';
    }
    tr.appendChild(td);
  });

  body.appendChild(tr);
}
```
